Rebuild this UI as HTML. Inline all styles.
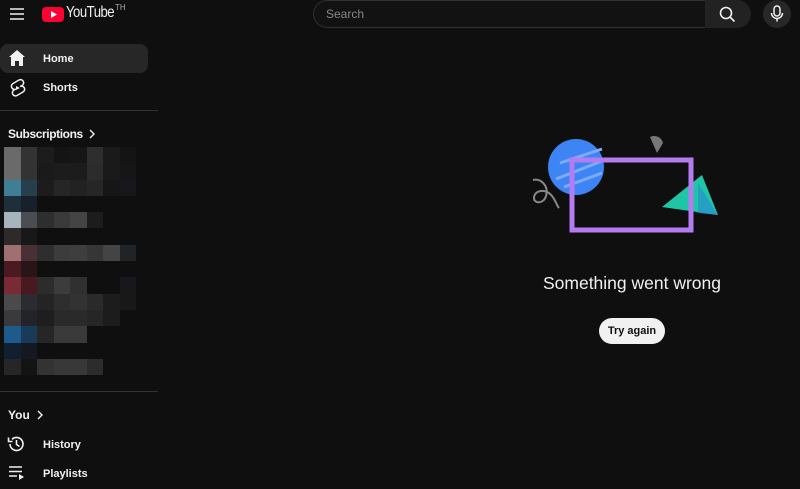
<!DOCTYPE html>
<html><head><meta charset="utf-8"><style>
*{margin:0;padding:0;box-sizing:border-box}
body{width:800px;height:489px;background:#0f0f0f;font-family:"Liberation Sans",sans-serif;color:#f1f1f1;position:relative;overflow:hidden}
.a{position:absolute}
.t{font-size:11px;font-weight:bold}
.h{font-size:12px;font-weight:bold}
.px{position:absolute;left:4px;top:147px;display:grid;grid-template-columns:repeat(8,16.5px);grid-auto-rows:16.3px}
</style></head><body>
<svg class="a" style="left:9px;top:7px" width="16" height="14"><path d="M1 2h14M1 7h14M1 12h14" stroke="#f1f1f1" stroke-width="1.6"/></svg>
<svg class="a" style="left:42px;top:7px" width="22" height="15"><rect x="0" y="0" width="22" height="15" rx="4" fill="#ff0033"/><path d="M9 4l6 3.5-6 3.5z" fill="#fff"/></svg>
<div class="a" style="left:66px;top:4px;font-size:16px;letter-spacing:-0.6px;transform:scaleX(0.82);transform-origin:left">YouTube</div>
<div class="a" style="left:115px;top:3px;font-size:8px;color:#aaa">TH</div>
<div class="a" style="left:313px;top:0;width:393px;height:28px;border:1px solid #303030;border-right:none;border-radius:14px 0 0 14px;background:#121212"></div>
<div class="a" style="left:326px;top:7px;font-size:12px;color:#888">Search</div>
<div class="a" style="left:705px;top:0;width:46px;height:28px;background:#222;border-radius:0 14px 14px 0"></div>
<svg class="a" style="left:718px;top:5px" width="18" height="18"><circle cx="8" cy="8" r="5.5" stroke="#f1f1f1" stroke-width="1.6" fill="none"/><path d="M12 12l4.5 4.5" stroke="#f1f1f1" stroke-width="1.6"/></svg>
<div class="a" style="left:763px;top:0;width:28px;height:28px;border-radius:50%;background:#272727"></div>
<svg class="a" style="left:769px;top:5px" width="16" height="18"><rect x="5" y="1" width="6" height="10" rx="3" stroke="#f1f1f1" stroke-width="1.5" fill="none"/><path d="M2.5 8a5.5 5.5 0 0 0 11 0M8 13.5v3" stroke="#f1f1f1" stroke-width="1.5" fill="none"/></svg>

<div class="a" style="left:0;top:44px;width:148px;height:29px;background:#272727;border-radius:8px"></div>
<svg class="a" style="left:8px;top:49px" width="18" height="18"><path d="M9 1L1 8h2v9h4v-5h4v5h4V8h2z" fill="#f1f1f1"/></svg>
<div class="a t" style="left:43px;top:53px">Home</div>
<svg class="a" style="left:8px;top:78px" width="18" height="20"><path d="M11 2l-6 3.5a3 3 0 0 0 3 5.5l-2 1a3 3 0 0 0 3 5.5l6-3.5a3 3 0 0 0-3-5.5l2-1a3 3 0 0 0-3-5.5z" stroke="#f1f1f1" stroke-width="1.5" fill="none"/><path d="M8 8l4 2-4 2z" fill="#f1f1f1"/></svg>
<div class="a t" style="left:43px;top:82px">Shorts</div>
<div class="a" style="left:0;top:110px;width:158px;height:1px;background:#333"></div>
<div class="a h" style="left:8px;top:127px;letter-spacing:-0.4px">Subscriptions</div>
<svg class="a" style="left:88px;top:129px" width="8" height="10"><path d="M2 1l4 4-4 4" stroke="#f1f1f1" stroke-width="1.4" fill="none"/></svg>
<div class="px">
<i style="background:#6a6a6a"></i><i style="background:#333"></i><i style="background:#1c1c1c"></i><i style="background:#141414"></i><i style="background:#161616"></i><i style="background:#2e2e2e"></i><i style="background:#1a1a1a"></i><i style="background:#141414"></i>
<i style="background:#6a6a6a"></i><i style="background:#333"></i><i style="background:#1a1a1a"></i><i style="background:#1c1c1c"></i><i style="background:#1c1c1c"></i><i style="background:#2c2c2c"></i><i style="background:#1a1a1a"></i><i style="background:#161618"></i>
<i style="background:#3f7f95"></i><i style="background:#25404c"></i><i style="background:#1c1c1c"></i><i style="background:#262626"></i><i style="background:#222"></i><i style="background:#262626"></i><i style="background:#161616"></i><i style="background:#18181c"></i>
<i style="background:#1f2f3a"></i><i style="background:#18202a"></i><i></i><i></i><i></i><i></i><i></i><i></i>
<i style="background:#a8b4bc"></i><i style="background:#4a4e52"></i><i style="background:#2e2e2e"></i><i style="background:#3a3a3a"></i><i style="background:#444"></i><i style="background:#1c1c1c"></i><i></i><i></i>
<i style="background:#2e2a2a"></i><i style="background:#181818"></i><i></i><i></i><i></i><i></i><i></i><i></i>
<i style="background:#a07070"></i><i style="background:#4a3034"></i><i style="background:#2e2e2e"></i><i style="background:#3c3c3c"></i><i style="background:#3e3e3e"></i><i style="background:#363636"></i><i style="background:#444"></i><i style="background:#202426"></i>
<i style="background:#4a1a20"></i><i style="background:#2a1418"></i><i></i><i></i><i></i><i></i><i></i><i></i>
<i style="background:#7a2a34"></i><i style="background:#4a1820"></i><i style="background:#2c2c2c"></i><i style="background:#3c3c3c"></i><i style="background:#303030"></i><i></i><i></i><i style="background:#18181c"></i>
<i style="background:#4a4a4c"></i><i style="background:#2a2c30"></i><i style="background:#242424"></i><i style="background:#2e2e2e"></i><i style="background:#323232"></i><i style="background:#2a2a2a"></i><i style="background:#1c1c1c"></i><i style="background:#181818"></i>
<i style="background:#3a3a3c"></i><i style="background:#22242a"></i><i style="background:#1e1e1e"></i><i style="background:#2a2a2a"></i><i style="background:#2a2a2a"></i><i style="background:#262626"></i><i style="background:#1c1c1c"></i><i></i>
<i style="background:#1e5a8a"></i><i style="background:#1a3a5a"></i><i style="background:#262626"></i><i style="background:#3a3a3a"></i><i style="background:#3a3a3a"></i><i></i><i></i><i></i>
<i style="background:#102030"></i><i style="background:#141820"></i><i></i><i></i><i></i><i></i><i></i><i></i>
<i style="background:#262626"></i><i style="background:#141414"></i><i style="background:#333"></i><i style="background:#383838"></i><i style="background:#383838"></i><i style="background:#2c2c2c"></i><i></i><i></i>
</div>
<div class="a" style="left:0;top:391px;width:158px;height:1px;background:#333"></div>
<div class="a h" style="left:8px;top:408px">You</div>
<svg class="a" style="left:36px;top:410px" width="8" height="10"><path d="M2 1l4 4-4 4" stroke="#f1f1f1" stroke-width="1.4" fill="none"/></svg>
<svg class="a" style="left:7px;top:435px" width="18" height="18"><path d="M3 9a6.5 6.5 0 1 0 2-4.7" stroke="#f1f1f1" stroke-width="1.6" fill="none"/><path d="M1.5 2.5v4h4" stroke="#f1f1f1" stroke-width="1.6" fill="none"/><path d="M9.5 5v4.5l3 2" stroke="#f1f1f1" stroke-width="1.6" fill="none"/></svg>
<div class="a t" style="left:43px;top:439px">History</div>
<svg class="a" style="left:8px;top:465px" width="18" height="16"><path d="M1 2h13M1 6.5h13M1 11h8" stroke="#f1f1f1" stroke-width="1.6"/><path d="M11 9v6l5-3z" fill="#f1f1f1"/></svg>
<div class="a t" style="left:43px;top:468px">Playlists</div>

<svg class="a" style="left:520px;top:125px" width="210" height="115">
<circle cx="56" cy="42" r="28" fill="#3d84f5"/>
<path d="M40 38l42-14M36 54l46-18M44 62l38-14" stroke="#7eabff" stroke-width="3"/>
<path d="M130 12a9 9 0 0 1 13 6l-6 10z" fill="#777"/>
<path d="M142 82l56 8-16-40z" fill="#1fc6a6"/>
<path d="M178 58l20 32-20-2z" fill="#2b8fd0" opacity=".7"/>
<rect x="52" y="35" width="119" height="70" fill="none" stroke="#b57cf2" stroke-width="5"/>
<path d="M13 55c8-2 16 6 13 16-2 8-12 8-12 2 0-8 12-10 18-2 4 5 5 10 7 12" stroke="#888" stroke-width="2" fill="none"/>
</svg>
<div class="a" style="left:532px;top:273px;width:200px;text-align:center;font-size:17.5px;color:#f1f1f1">Something went wrong</div>
<div class="a" style="left:599px;top:318px;width:66px;height:26px;border-radius:13px;background:#f1f1f1;color:#0f0f0f;font-size:11px;font-weight:bold;text-align:center;line-height:26px">Try again</div>
</body></html>
